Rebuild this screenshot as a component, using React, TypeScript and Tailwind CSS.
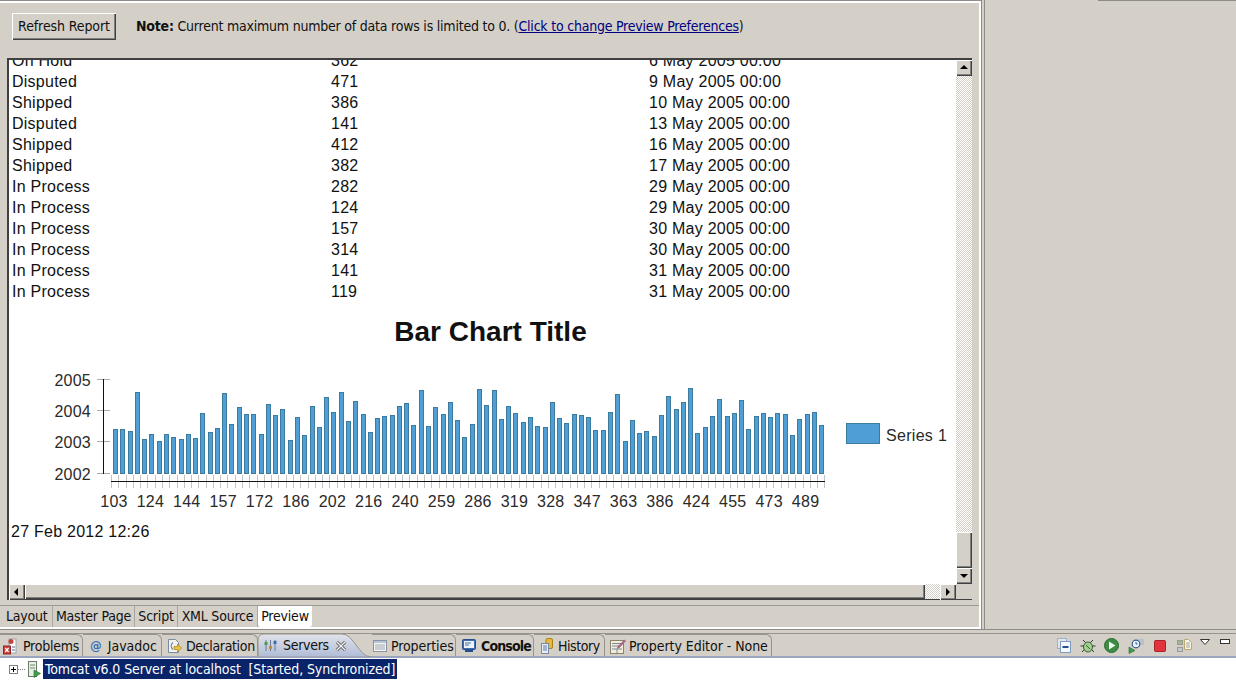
import React from "react"

const ui = "font-['DejaVu_Sans_Condensed','Noto_Sans',sans-serif]"
const report = "font-['Liberation_Sans',Arial,sans-serif]"

const rows = [
  ["On Hold", "362", "6 May 2005 00:00"],
  ["Disputed", "471", "9 May 2005 00:00"],
  ["Shipped", "386", "10 May 2005 00:00"],
  ["Disputed", "141", "13 May 2005 00:00"],
  ["Shipped", "412", "16 May 2005 00:00"],
  ["Shipped", "382", "17 May 2005 00:00"],
  ["In Process", "282", "29 May 2005 00:00"],
  ["In Process", "124", "29 May 2005 00:00"],
  ["In Process", "157", "30 May 2005 00:00"],
  ["In Process", "314", "30 May 2005 00:00"],
  ["In Process", "141", "31 May 2005 00:00"],
  ["In Process", "119", "31 May 2005 00:00"],
]

// tops of the bars as read off the picture, 3x from y=360
const barTops = [
  208, 208, 214, 97, 238, 223, 244, 223, 232, 238, 223, 235, 160, 217, 205, 100, 193, 142, 163, 163, 223, 133, 166, 148,
  241, 172, 226, 139, 202, 112, 157, 97, 184, 124, 163, 217, 175, 169, 166, 139, 130, 196, 91, 199, 142, 163, 127, 181,
  232, 193, 88, 136, 91, 178, 139, 160, 187, 172, 199, 202, 127, 175, 190, 163, 166, 172, 211, 211, 157, 103, 244, 181,
  220, 214, 229, 166, 109, 148, 127, 85, 220, 202, 169, 118, 169, 160, 121, 208, 169, 160, 172, 160, 163, 226, 178, 163,
  157, 196,
]

const xLabels = ["103", "124", "144", "157", "172", "186", "202", "216", "240", "259", "286", "319", "328", "347", "363", "386", "424", "455", "473", "489"]
const yLabels: [string, number][] = [["2005", 379.5], ["2004", 410.5], ["2003", 441.5], ["2002", 473.5]]

const BAR_STEP = 7.28

function Chart() {
  const ticks = Array.from({ length: 99 }, (_, i) => Math.round(111 + i * BAR_STEP) + 0.5)
  return (
    <svg viewBox="9 360 946 160" className="block h-[160px] w-[946px]" fontFamily="'Liberation Sans', Arial, sans-serif" fontSize="16" fill="#2a2a2a">
      {yLabels.map(([label, y]) => (
        <g key={label}>
          <line x1="97" x2="110" y1={y} y2={y} stroke="#aaa" />
          <text x="91" y={y + 6} textAnchor="end">{label}</text>
        </g>
      ))}
      <line x1="103.5" x2="103.5" y1="379" y2="474" stroke="#111" />
      {barTops.map((t, i) => {
        const y = Math.round(360 + t / 3) + 0.5
        return <rect key={i} x={Math.round(113 + i * BAR_STEP) + 0.5} y={y} width="4" height={473.5 - y} fill="#4f9fd6" stroke="#3c7a9e" />
      })}
      {ticks.map((x, i) => (
        <line key={i} x1={x} x2={x} y1="475" y2="488" stroke="#c4c4c4" />
      ))}
      <line x1="111" x2="825" y1="481.5" y2="481.5" stroke="#111" />
      {xLabels.map((label, i) => (
        <text key={label} x={114 + i * 36.4} y="507" textAnchor="middle">{label}</text>
      ))}
      <rect x="846.5" y="423.5" width="33" height="20" fill="#4f9fd6" stroke="#3c7a9e" />
      <text x="886" y="441" letterSpacing="0.3">Series 1</text>
    </svg>
  )
}

const bevel = "bg-[#d4d0c8] shadow-[inset_1px_1px_0_#fff,inset_-1px_-1px_0_#404040,inset_-2px_-2px_0_#808080]"
const hatch = "bg-[repeating-conic-gradient(#d4d0c8_0%_25%,#ffffff_0%_50%)] bg-[length:2px_2px]"

function Arrow({ dir }: { dir: "up" | "down" | "left" | "right" }) {
  const pts = { up: "4,9 12,9 8,5", down: "4,6 12,6 8,10", left: "9,4 9,12 5,8", right: "6,4 6,12 10,8" }[dir]
  return (
    <svg viewBox="0 0 16 16" className="h-4 w-4">
      <polygon points={pts} fill="#000" />
    </svg>
  )
}

function ScrollButton({ dir }: { dir: "up" | "down" | "left" | "right" }) {
  return (
    <div className={`${bevel} flex h-4 w-4 shrink-0 items-center justify-center`}>
      <Arrow dir={dir} />
    </div>
  )
}

function ProblemsIcon() {
  return (
    <svg viewBox="0 0 14 17" className="h-[17px] w-[14px]">
      <rect x="6" y="1" width="7" height="14" fill="#fff" stroke="#9aa3b0" />
      <circle cx="8" cy="3.5" r="2.5" fill="#c8403c" />
      <rect x="0.5" y="8" width="7" height="8" fill="#c8403c" stroke="#8c2a28" />
      <path d="M2.2 10l3.4 4M5.6 10l-3.4 4" stroke="#fff" strokeWidth="1.2" />
      <path d="M9 9h3M9 12h3" stroke="#5a6a8a" />
    </svg>
  )
}

function DeclarationIcon() {
  return (
    <svg viewBox="0 0 15 17" className="h-[17px] w-[15px]">
      <path d="M1.5 1.5h7l3 3v10h-10z" fill="#f2f2ea" stroke="#7b8aa0" />
      <path d="M6 4.5c-1.5 0-1 3-2.2 3.5 1.2.5.7 3.5 2.2 3.5" fill="none" stroke="#3a6ea8" />
      <path d="M7 8.5h3.5V6l4 4-4 4v-2.5H7z" fill="#f0c040" stroke="#a8801c" strokeWidth="0.7" />
    </svg>
  )
}

function ServersIcon() {
  return (
    <svg viewBox="0 0 13 13" className="h-[13px] w-[13px]">
      <path d="M2 1v11M6.5 1v11M11 1v11" stroke="#6b7a8c" />
      <rect x="0.5" y="3" width="3" height="3" fill="#4c9a4c" />
      <rect x="5" y="7" width="3" height="3" fill="#d08a2c" />
      <rect x="9.5" y="2" width="3" height="3" fill="#3c6cb4" />
    </svg>
  )
}

function PropertiesIcon() {
  return (
    <svg viewBox="0 0 14 12" className="h-3 w-[14px]">
      <rect x="0.5" y="0.5" width="13" height="11" fill="#f4f4f0" stroke="#8a94a4" />
      <rect x="1" y="1" width="12" height="2" fill="#b8c4d8" />
      <path d="M2 5h10M2 7h10M2 9h10" stroke="#a0a8b4" />
    </svg>
  )
}

function ConsoleIcon() {
  return (
    <svg viewBox="0 0 14 14" className="h-[14px] w-[14px]">
      <rect x="0.5" y="0.5" width="13" height="10" rx="1" fill="#3d6fb0" stroke="#24508c" />
      <rect x="2" y="2" width="10" height="7" fill="#eef3fa" />
      <path d="M3 4h6M3 6h4" stroke="#3d6fb0" />
      <rect x="3" y="11" width="8" height="2" fill="#24508c" />
    </svg>
  )
}

function HistoryIcon() {
  return (
    <svg viewBox="0 0 12 16" className="h-4 w-3">
      <rect x="5" y="0.5" width="6.5" height="10" rx="1.5" fill="#e8b838" stroke="#a8801c" />
      <rect x="0.5" y="5.5" width="7" height="10" fill="#e8eef6" stroke="#7b8aa0" />
      <path d="M2 8h4M2 10h4M2 12h4" stroke="#5a78a8" />
    </svg>
  )
}

function PropertyEditorIcon() {
  return (
    <svg viewBox="0 0 16 15" className="h-[15px] w-4">
      <rect x="0.5" y="1.5" width="13" height="13" fill="#f2ecd8" stroke="#8a8468" />
      <path d="M2 4.5h9M2 7h7M2 10h10M7 10v4" stroke="#7b8aa0" />
      <path d="M14.5 1l1 1-6 6.5-2 .8.6-2.1z" fill="#c86a9a" stroke="#7a4a64" strokeWidth="0.6" />
    </svg>
  )
}

function CloseIcon() {
  return (
    <svg viewBox="0 0 10 10" className="h-3 w-3">
      <path d="M1.5 1.5l7 7M8.5 1.5l-7 7" stroke="#6b6b6b" strokeWidth="2.6" />
      <path d="M1.5 1.5l7 7M8.5 1.5l-7 7" stroke="#fff" strokeWidth="1" />
    </svg>
  )
}

type TabProps = {
  width: string
  padding: string
  gap: string
  icon: React.ReactNode
  label: string
  tracking: string
  bold?: boolean
}

function ViewTab({ width, padding, gap, icon, label, tracking, bold }: TabProps) {
  return (
    <div className={`${width} ${padding} ${gap} flex h-[23px] shrink-0 items-center rounded-tr-[6px] border-r border-t border-[#97948c] text-[14px] text-[#111] ${bold ? "font-bold" : ""}`}>
      {icon}
      <span className={`${tracking} whitespace-pre`}>{label}</span>
    </div>
  )
}

function ServersTab() {
  return (
    <div className="relative flex h-[23px] w-[114px] shrink-0 items-center gap-[6px] pl-[6px] text-[14px] text-[#111]">
      <svg viewBox="0 0 114 24" className="absolute left-0 top-[-1px] h-6 w-[114px]">
        <defs>
          <linearGradient id="srv" x1="0" x2="0" y1="0" y2="1">
            <stop offset="0" stopColor="#e2e3ea" />
            <stop offset="1" stopColor="#b0bcd6" />
          </linearGradient>
        </defs>
        <path d="M0 24V7Q0 1 6 1H84C96 1 100 23 113 24Z" fill="url(#srv)" stroke="#97948c" />
      </svg>
      <span className="relative flex items-center gap-[6px]">
        <ServersIcon />
        <span className="tracking-[-0.3px]">Servers</span>
        <span className="flex"><CloseIcon /></span>
      </span>
    </div>
  )
}

function ToolIcons() {
  return (
    <div className="flex h-[23px] items-center pr-[6px]">
      <svg viewBox="0 0 14 15" className="mr-[9px] h-[15px] w-[14px]">
        <rect x="0.5" y="0.5" width="9" height="10" fill="#dfe6f0" stroke="#9fb0c8" />
        <rect x="3.5" y="3.5" width="10" height="11" fill="#f4f8fc" stroke="#7f9cc0" />
        <rect x="5.5" y="8" width="6" height="2" fill="#24508c" />
      </svg>
      <svg viewBox="0 0 16 16" className="mr-[8px] h-4 w-4">
        <path d="M3 2l3 3M13 2l-3 3M0.5 8H4M12 8h3.5M2 14l3-3M14 14l-3-3" stroke="#303830" />
        <ellipse cx="8" cy="9" rx="4.5" ry="5" fill="#9fcf8f" stroke="#3c5c3c" />
        <path d="M6 7l4 4" stroke="#2f6f2f" />
      </svg>
      <svg viewBox="0 0 15 15" className="mr-[9px] h-[15px] w-[15px]">
        <circle cx="7.5" cy="7.5" r="7" fill="#3c8c44" stroke="#2a6a30" />
        <polygon points="5,3.5 5,11.5 11.5,7.5" fill="#f4fff0" />
      </svg>
      <svg viewBox="0 0 16 16" className="mr-[10px] h-4 w-4">
        <path d="M10 2h6M11 4h5M12 6h4" stroke="#a0b0c8" />
        <circle cx="8" cy="6" r="3.8" fill="#eef3fa" stroke="#2f5c94" strokeWidth="1.2" />
        <path d="M8 4v2h1.5" stroke="#2f5c94" fill="none" />
        <polygon points="1,9 1,15.5 7,12.5" fill="#3c9c4c" stroke="#2a6a30" strokeWidth="0.6" />
      </svg>
      <svg viewBox="0 0 12 12" className="mr-[11px] h-3 w-3">
        <rect x="0.5" y="0.5" width="11" height="11" rx="1" fill="#e2333c" stroke="#a82028" />
      </svg>
      <svg viewBox="0 0 15 15" className="mr-[8px] h-[15px] w-[15px]">
        <rect x="0.5" y="2.5" width="5" height="4" fill="#9fb88f" stroke="#9a9a90" />
        <rect x="0.5" y="9.5" width="5" height="4" fill="#c0c8d8" stroke="#9a9a90" />
        <path d="M7.5 1.5h4l3 3v7h-7z" fill="#f6f4e8" stroke="#b8a870" />
        <path d="M9 5h4M9 7h4M9 9h4" stroke="#a8a898" />
      </svg>
      <svg viewBox="0 0 10 6" className="mr-[10px] mb-[8px] h-1.5 w-2.5">
        <polygon points="0.5,0.5 9.5,0.5 5,5.5" fill="#fff" stroke="#333" />
      </svg>
      <div className="mb-[8px] h-[5px] w-[10px] border border-[#333] bg-white" />
    </div>
  )
}

export default function App() {
  return (
    <div className={`${ui} flex h-[691px] w-[1236px] flex-col overflow-hidden bg-[#d4d0c8]`}>
      <div className="flex h-[629px] shrink-0">
        {/* editor */}
        <div className="flex h-full w-[982px] shrink-0 flex-col border-r border-t border-[#8c8c88]">
          <div className="h-full border-b-2 border-r-2 border-t-2 border-b-white border-r-white border-t-white">
            <div className="flex h-[55px] items-center pb-[8px] pl-[12px]">
              <button className={`${bevel} h-[27px] w-[104px] text-[14px] tracking-[-0.1px] text-[#111]`}>Refresh Report</button>
              <p className="ml-[20px] whitespace-pre text-[14px] tracking-[-0.22px] text-[#111]">
                <b>Note:</b> Current maximum number of data rows is limited to 0. (
                <a className="text-[#000080] underline">Click to change Preview Preferences</a>)
              </p>
            </div>
            {/* report frame */}
            <div className="ml-[7px] flex h-[542px] w-[965px] flex-col border-l-2 border-t-2 border-[#404040]">
              <div className="flex min-h-0 flex-1">
                <div className={`${report} min-w-0 flex-1 overflow-hidden bg-white text-[16px] tracking-[0.25px] text-[#111]`}>
                  <div className="-mt-[10px]">
                    {rows.map(([status, qty, date], i) => (
                      <div key={i} className="grid h-[21px] grid-cols-[319px_318px_1fr] pl-[3px] leading-[21px]">
                        <span>{status}</span>
                        <span>{qty}</span>
                        <span>{date}</span>
                      </div>
                    ))}
                    <div className="flex h-[58px] items-center justify-center pl-[16px] pt-[2px] text-[28px] font-bold tracking-normal">Bar Chart Title</div>
                    <Chart />
                    <div className="pl-[2px] pt-px leading-[21px]">27 Feb 2012 12:26</div>
                  </div>
                </div>
                {/* vertical scrollbar */}
                <div className={`${hatch} flex w-4 shrink-0 flex-col`}>
                  <ScrollButton dir="up" />
                  <div className="flex-1" />
                  <div className={`${bevel} h-9 w-4`} />
                  <ScrollButton dir="down" />
                </div>
              </div>
              {/* horizontal scrollbar */}
              <div className="flex h-[16px] shrink-0 border-b border-[#404040]">
                <ScrollButton dir="left" />
                <div className={`${bevel} w-[900px] shrink-0`} />
                <div className={`${hatch} flex-1`} />
                <ScrollButton dir="right" />
                <div className="w-4 shrink-0 bg-[#d4d0c8]" />
              </div>
            </div>
            {/* editor tabs */}
            <div className="mt-[5px] flex h-[22px] border-t border-[#9a9a94] text-[14px] tracking-[-0.2px] text-[#111]">
              <div className="flex h-[21px] w-[53px] items-center border-r border-[#a8a8a0] pl-[6px]">Layout</div>
              <div className="flex h-[21px] w-[82px] items-center justify-center border-r border-[#a8a8a0]">Master Page</div>
              <div className="flex h-[21px] w-[43px] items-center justify-center border-r border-[#a8a8a0]">Script</div>
              <div className="flex h-[21px] w-[80px] items-center justify-center border-r border-[#a8a8a0]">XML Source</div>
              <div className="flex h-[21px] w-[54px] items-center justify-center rounded-b-[3px] bg-white">Preview</div>
            </div>
          </div>
        </div>
        {/* empty right panel */}
        <div className="ml-[2px] flex-1 border-l border-[#8c8c88]">
          <div className="ml-[113px] h-px bg-[#8c8c88]" />
        </div>
      </div>

      {/* bottom views */}
      <div className="h-[4px] shrink-0 border-t border-[#8c8c88]" />
      <div className="flex h-[23px] shrink-0 justify-between border-t border-[#97948c]">
        <div className="flex">
          <ViewTab width="w-[83px]" padding="pl-[3px]" gap="gap-[6px]" tracking="tracking-[-0.25px]" icon={<ProblemsIcon />} label="Problems" />
          <ViewTab width="w-[79px]" padding="pl-[7px]" gap="gap-[6px]" tracking="tracking-normal" icon={<span className="text-[13px] font-bold text-[#3c70b8]">@</span>} label="Javadoc" />
          <ViewTab width="w-[96px]" padding="pl-[5px]" gap="gap-[4px]" tracking="tracking-[-0.35px]" icon={<DeclarationIcon />} label="Declaration" />
          <ServersTab />
          <ViewTab width="w-[84px]" padding="pl-[1px]" gap="gap-[4px]" tracking="tracking-[-0.1px]" icon={<PropertiesIcon />} label="Properties" />
          <ViewTab width="w-[78px]" padding="pl-[6px]" gap="gap-[5px]" tracking="tracking-[-0.85px]" icon={<ConsoleIcon />} label="Console" bold />
          <ViewTab width="w-[71px]" padding="pl-[7px]" gap="gap-[5px]" tracking="tracking-[-0.45px]" icon={<HistoryIcon />} label="History" />
          <ViewTab width="w-[167px]" padding="pl-[5px]" gap="gap-[3px]" tracking="tracking-[-0.05px]" icon={<PropertyEditorIcon />} label="Property Editor - None" />
        </div>
        <ToolIcons />
      </div>
      <div className="h-[2px] shrink-0 bg-[#9aa6c0]" />
      <div className="flex-1 bg-white pt-[1px]">
        <div className="flex h-[20px] items-center">
          <svg viewBox="0 0 28 20" className="h-5 w-7 shrink-0">
            <rect x="9.5" y="6.5" width="8" height="8" fill="#fff" stroke="#808080" />
            <path d="M11 10.5h5M13.5 8v5" stroke="#000" />
            <path d="M18 10.5h8" stroke="#808080" strokeDasharray="1 1" />
          </svg>
          <svg viewBox="0 0 13 17" className="mr-[2px] h-[17px] w-[13px] shrink-0">
            <rect x="0.5" y="0.5" width="8" height="15" fill="#e8efe4" stroke="#6c7a6c" />
            <path d="M2 4h5M2 7h5" stroke="#6c8a6c" />
            <polygon points="6,9 6,16.5 12.5,12.5" fill="#3ca04c" stroke="#2a6a30" strokeWidth="0.6" />
          </svg>
          <span className="flex h-[20px] w-[354px] items-center whitespace-pre bg-[#0a246a] pl-[2px] text-[14px] tracking-[-0.1px] text-white">
            Tomcat v6.0 Server at localhost  [Started, Synchronized]
          </span>
        </div>
      </div>
    </div>
  )
}
